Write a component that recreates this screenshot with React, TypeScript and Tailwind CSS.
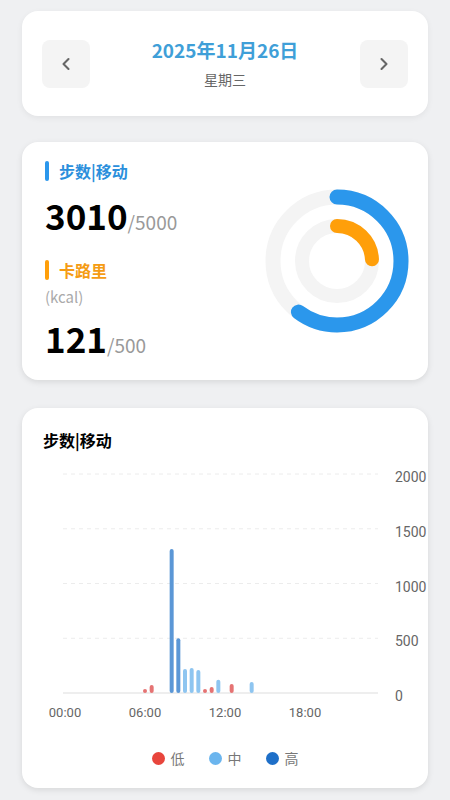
import React from "react";
import { ChevronLeft, ChevronRight } from "lucide-react";

type Bar = { slot: number; value: number; level: "low" | "mid" | "high" };

const bars: Bar[] = [
  { slot: 12, value: 35, level: "low" },
  { slot: 13, value: 73, level: "low" },
  { slot: 16, value: 1315, level: "high" },
  { slot: 17, value: 500, level: "high" },
  { slot: 18, value: 220, level: "mid" },
  { slot: 19, value: 228, level: "mid" },
  { slot: 20, value: 210, level: "mid" },
  { slot: 21, value: 27, level: "low" },
  { slot: 22, value: 55, level: "low" },
  { slot: 23, value: 120, level: "mid" },
  { slot: 25, value: 82, level: "low" },
  { slot: 28, value: 100, level: "mid" },
];

const barColor = { low: "#e57373", mid: "#8ec5f0", high: "#5b97d6" };

const font = { fontFamily: '"Noto Sans CJK SC", "Noto Sans", sans-serif' };
const axisFont = { fontFamily: 'Roboto, "Noto Sans", sans-serif' };

const Ring = () => {
  const outerR = 64;
  const innerR = 35;
  const outerC = 2 * Math.PI * outerR;
  const innerC = 2 * Math.PI * innerR;
  return (
    <svg width="150" height="150" viewBox="0 0 150 150">
      <circle cx="75" cy="75" r={outerR} fill="none" stroke="#f4f4f4" strokeWidth="15" />
      <circle cx="75" cy="75" r={innerR} fill="none" stroke="#f4f4f4" strokeWidth="14" />
      <circle
        cx="75"
        cy="75"
        r={outerR}
        fill="none"
        stroke="#2b97ec"
        strokeWidth="15"
        strokeLinecap="round"
        strokeDasharray={`${outerC * (3010 / 5000)} ${outerC}`}
        transform="rotate(-90 75 75)"
      />
      <circle
        cx="75"
        cy="75"
        r={innerR}
        fill="none"
        stroke="#ff9f0a"
        strokeWidth="14"
        strokeLinecap="round"
        strokeDasharray={`${innerC * (121 / 500)} ${innerC}`}
        transform="rotate(-90 75 75)"
      />
    </svg>
  );
};

const StepChart = () => {
  const base = 234;
  const scale = 219 / 2000;
  const x0 = 43;
  const slotW = 320 / 48;
  const ticks = [2000, 1500, 1000, 500, 0];
  const hours = ["00:00", "06:00", "12:00", "18:00"];
  return (
    <svg width="406" height="265" viewBox="0 0 406 265" style={axisFont}>
      {ticks.map((t) => {
        const y = base - t * scale;
        return (
          <g key={t}>
            <line
              x1="41"
              x2="356"
              y1={y}
              y2={y}
              stroke={t === 0 ? "#dddddd" : "#ececec"}
              strokeWidth="1"
              strokeDasharray={t === 0 ? undefined : "4 4"}
            />
            <text x="373" y={y + 8} fontSize="14" fill="#666666">
              {t}
            </text>
          </g>
        );
      })}
      {bars.map((b) => {
        const h = Math.max(b.value * scale, 4);
        const cx = x0 + b.slot * slotW;
        return (
          <rect
            key={b.slot}
            x={cx - 2}
            y={base - h}
            width="4"
            height={h}
            rx="2"
            fill={barColor[b.level]}
          />
        );
      })}
      {hours.map((h, i) => (
        <text key={h} x={x0 + i * 80} y="258" fontSize="13" fill="#666666" textAnchor="middle">
          {h}
        </text>
      ))}
    </svg>
  );
};

export default function App() {
  return (
    <div className="min-h-screen bg-[#eff0f2] px-[22px] pt-[11px] pb-[12px]" style={font}>
      <div className="flex h-[105px] items-center justify-between rounded-2xl bg-white px-[20px] shadow-[0_2px_6px_rgba(0,0,0,0.06)]">
        <button className="flex h-[48px] w-[48px] items-center justify-center rounded-lg bg-[#f4f4f4] text-[#666]">
          <ChevronLeft size={20} strokeWidth={2.5} />
        </button>
        <div className="flex flex-col items-center">
          <div className="text-[19px] leading-[24px] font-bold text-[#3f9fd8]">2025年11月26日</div>
          <div className="mt-[7px] text-[14px] leading-[20px] text-[#666]">星期三</div>
        </div>
        <button className="flex h-[48px] w-[48px] items-center justify-center rounded-lg bg-[#f4f4f4] text-[#666]">
          <ChevronRight size={20} strokeWidth={2.5} />
        </button>
      </div>

      <div className="mt-[26px] flex h-[238px] items-center justify-between rounded-2xl bg-white pr-[16px] pl-[23px] shadow-[0_2px_6px_rgba(0,0,0,0.1)]">
        <div className="flex flex-col self-start pt-[18px]">
          <div className="flex items-center gap-[10px]">
            <span className="h-[20px] w-[4px] rounded-full bg-[#2b97ec]" />
            <span className="text-[16px] leading-[22px] font-bold text-[#2b8fdc]">步数|移动</span>
          </div>
          <div className="mt-[12px] flex items-baseline">
            <span className="text-[35px] leading-[42px] font-bold text-black">3010</span>
            <span className="text-[19px] text-[#999]">/5000</span>
          </div>
          <div className="mt-[22px] flex items-center gap-[10px]">
            <span className="h-[20px] w-[4px] rounded-full bg-[#ff9f0a]" />
            <span className="text-[16px] leading-[22px] font-bold text-[#f59c14]">卡路里</span>
          </div>
          <div className="mt-[6px] text-[15px] leading-[20px] text-[#aaa]">(kcal)</div>
          <div className="mt-[10px] flex items-baseline">
            <span className="text-[35px] leading-[42px] font-bold text-black">121</span>
            <span className="text-[19px] text-[#999]">/500</span>
          </div>
        </div>
        <Ring />
      </div>

      <div className="mt-[28px] flex h-[380px] flex-col rounded-2xl bg-white shadow-[0_2px_6px_rgba(0,0,0,0.1)]">
        <div className="pt-[21px] pl-[21px] text-[16px] leading-[22px] font-bold text-black">步数|移动</div>
        <div className="mt-[8px]">
          <StepChart />
        </div>
        <div className="mt-[24px] flex items-center justify-center gap-[24px] text-[14px] text-[#777]">
          <div className="flex items-center gap-[6px]">
            <span className="h-[13px] w-[13px] rounded-full bg-[#e8453c]" />
            <span>低</span>
          </div>
          <div className="flex items-center gap-[6px]">
            <span className="h-[13px] w-[13px] rounded-full bg-[#6bb5ee]" />
            <span>中</span>
          </div>
          <div className="flex items-center gap-[6px]">
            <span className="h-[13px] w-[13px] rounded-full bg-[#1e6fc8]" />
            <span>高</span>
          </div>
        </div>
      </div>
    </div>
  );
}
